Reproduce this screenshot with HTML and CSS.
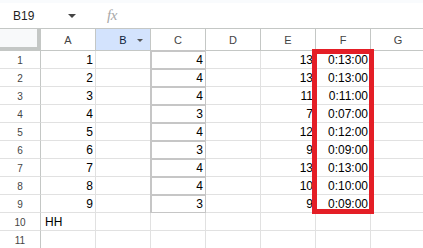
FILE: index.html
```html
<!DOCTYPE html>
<html>
<head>
<meta charset="utf-8">
<link rel="stylesheet" href="styles.css">
</head>
<body>
<div class="topstrip"></div>
<div class="fbar">
  <div class="namebox"><span class="ref">B19</span><span class="caret"></span></div>
  <div class="fx">fx</div>
</div>
<div class="sheet">
  <div class="grid">
    <div class="corner"></div>
    <div class="ch">A</div>
    <div class="ch sel">B<span class="hcaret"></span></div>
    <div class="ch">C</div>
    <div class="ch">D</div>
    <div class="ch">E</div>
    <div class="ch">F</div>
    <div class="ch">G</div>

    <div class="rh">1</div><div class="c num">1</div><div class="c"></div><div class="c num box">4</div><div class="c"></div><div class="c num">13</div><div class="c num">0:13:00</div><div class="c"></div>
    <div class="rh">2</div><div class="c num">2</div><div class="c"></div><div class="c num box">4</div><div class="c"></div><div class="c num">13</div><div class="c num">0:13:00</div><div class="c"></div>
    <div class="rh">3</div><div class="c num">3</div><div class="c"></div><div class="c num box">4</div><div class="c"></div><div class="c num">11</div><div class="c num">0:11:00</div><div class="c"></div>
    <div class="rh">4</div><div class="c num">4</div><div class="c"></div><div class="c num box">3</div><div class="c"></div><div class="c num">7</div><div class="c num">0:07:00</div><div class="c"></div>
    <div class="rh">5</div><div class="c num">5</div><div class="c"></div><div class="c num box">4</div><div class="c"></div><div class="c num">12</div><div class="c num">0:12:00</div><div class="c"></div>
    <div class="rh">6</div><div class="c num">6</div><div class="c"></div><div class="c num box">3</div><div class="c"></div><div class="c num">9</div><div class="c num">0:09:00</div><div class="c"></div>
    <div class="rh">7</div><div class="c num">7</div><div class="c"></div><div class="c num box">4</div><div class="c"></div><div class="c num">13</div><div class="c num">0:13:00</div><div class="c"></div>
    <div class="rh">8</div><div class="c num">8</div><div class="c"></div><div class="c num box">4</div><div class="c"></div><div class="c num">10</div><div class="c num">0:10:00</div><div class="c"></div>
    <div class="rh">9</div><div class="c num">9</div><div class="c"></div><div class="c num box">3</div><div class="c"></div><div class="c num">9</div><div class="c num">0:09:00</div><div class="c"></div>
    <div class="rh">10</div><div class="c txt">HH</div><div class="c"></div><div class="c"></div><div class="c"></div><div class="c"></div><div class="c"></div><div class="c"></div>
    <div class="rh">11</div><div class="c"></div><div class="c"></div><div class="c"></div><div class="c"></div><div class="c"></div><div class="c"></div><div class="c"></div>
  </div>
  <div class="highlight"></div>
</div>
</body>
</html>
```
FILE: styles.css
```css
* { box-sizing: border-box; }
html, body { margin: 0; padding: 0; background: #fff; }
body {
  width: 423px;
  height: 248px;
  overflow: hidden;
  font-family: "Liberation Sans", Arial, sans-serif;
  color: #000;
}
.topstrip { height: 3px; background: #f9fbfd; }
.fbar {
  height: 26px;
  display: flex;
  align-items: center;
  border-bottom: 1px solid #c4c7c5;
}
.namebox {
  width: 96px;
  display: flex;
  align-items: center;
  padding-left: 13px;
  padding-right: 10px;
  justify-content: space-between;
}
.ref { font-size: 12px; color: #1f1f1f; }
.caret {
  width: 0; height: 0;
  border-left: 4px solid transparent;
  border-right: 4px solid transparent;
  border-top: 4px solid #444;
  margin-right: 10px;
}
.fx {
  font-family: "Liberation Serif", "Times New Roman", serif;
  font-style: italic;
  font-size: 15px;
  color: #a8a8a8;
  margin-left: 11px;
  letter-spacing: -0.5px;
}
.sheet { position: relative; }
.grid {
  display: grid;
  grid-template-columns: 41px repeat(7, 55px);
  grid-template-rows: 22px repeat(11, 18px);
}
.corner {
  background: #f8f9fa;
  border-right: 4px solid #c4c7c5;
  border-bottom: 4px solid #c4c7c5;
}
.ch {
  display: flex;
  align-items: center;
  justify-content: center;
  font-size: 11px;
  color: #444;
  border-right: 1px solid #c4c7c5;
  border-bottom: 1px solid #c4c7c5;
  padding-top: 1px;
}
.ch.sel { background: #d3e3fd; color: #0b1a3a; position: relative; }
.hcaret {
  position: absolute;
  right: 7px;
  top: 10px;
  width: 0; height: 0;
  border-left: 3.5px solid transparent;
  border-right: 3.5px solid transparent;
  border-top: 3.5px solid #555;
}
.rh {
  font-size: 10px;
  color: #444;
  display: flex;
  align-items: center;
  justify-content: center;
  border-right: 1px solid #c4c7c5;
  border-bottom: 1px solid #e1e1e1;
  padding-top: 1px;
}
.c {
  border-right: 1px solid #e1e1e1;
  border-bottom: 1px solid #e1e1e1;
  font-size: 12px;
  line-height: 17px;
  white-space: nowrap;
  overflow: visible;
  padding: 1px 2px 0 3px;
}
.c.num { text-align: right; padding-right: 2px; }
.c.box {
  border-right: 1px solid #c6c6c6;
  border-bottom: 1px solid #c6c6c6;
  box-shadow: inset 1px 1px 0 #c6c6c6, -1px 0 0 #c6c6c6, 0 -1px 0 #c6c6c6;
}
.c.txt { text-align: left; padding-left: 4px; }
.highlight {
  position: absolute;
  left: 312px;
  top: 20px;
  width: 62px;
  height: 165px;
  border: 5px solid #e41e26;
}
```
